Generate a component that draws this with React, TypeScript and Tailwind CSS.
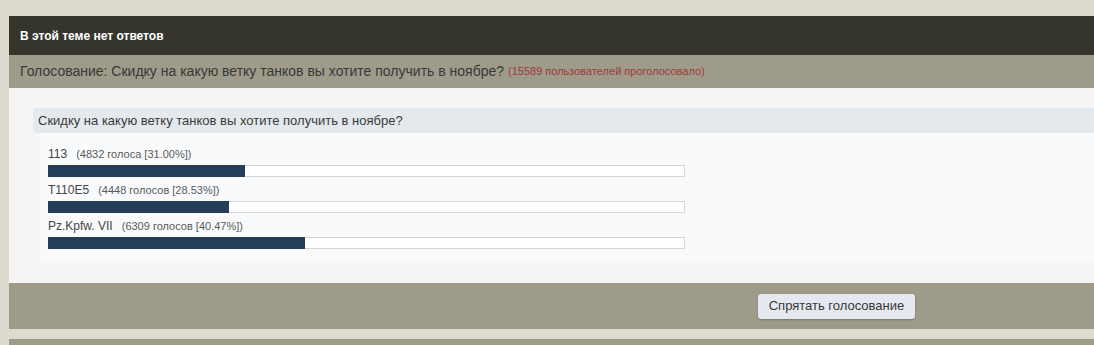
const options = [
  { name: "113", votes: "4832 голоса", pct: 31.0 },
  { name: "T110E5", votes: "4448 голосов", pct: 28.53 },
  { name: "Pz.Kpfw. VII", votes: "6309 голосов", pct: 40.47 },
];

export default function App() {
  return (
    <div
      className="h-[345px] w-[1094px] overflow-hidden bg-[#dddbcf] pt-4 pl-[9px]"
      style={{ fontFamily: '"Liberation Sans", Arial, sans-serif' }}
    >
      {/* шапка темы */}
      <div className="flex h-[39px] items-center bg-[#35352c] pl-[11px] text-[12px] font-bold text-white">
        В этой теме нет ответов
      </div>

      <div className="flex h-[33px] items-center bg-[#9e9b8b] pl-[11px] text-[14px] text-[#383838]">
        Голосование: Скидку на какую ветку танков вы хотите получить в ноябре?
        <span className="ml-1 text-[11px] text-[#9e3a3a]">(15589 пользователей проголосовало)</span>
      </div>

      {/* опрос */}
      <div className="h-[195px] bg-[#f5f5f5] pt-5 pl-6">
        <div className="flex h-[25px] items-center rounded-l-sm bg-[#e4e9ee] pl-[5px] text-[13px] text-[#3a3a3a]">
          Скидку на какую ветку танков вы хотите получить в ноябре?
        </div>
        <div className="ml-[7px] flex h-[128px] flex-col gap-[6px] bg-[#f8fafb] pt-[14px] pl-2">
          {options.map((o) => (
            <div key={o.name} className="flex flex-col gap-[5px]">
              <div className="flex h-[13px] items-end text-[12px] leading-none text-[#444444]">
                {o.name}
                <span className="ml-[9px] text-[11px] text-[#5a5a5a]">
                  ({o.votes} [{o.pct.toFixed(2)}%])
                </span>
              </div>
              <div className="flex h-[12px] w-[637px] border border-[#d6d6d6] bg-white">
                <div className="-my-px -ml-px h-[12px] bg-[#243e5a]" style={{ width: `${o.pct}%` }} />
              </div>
            </div>
          ))}
        </div>
      </div>

      <div className="flex h-[46px] items-center bg-[#9e9b8b] pl-[749px]">
        <button className="h-[25px] w-[157px] rounded-[3px] bg-[#e5e9ef] text-[13px] text-[#383838] shadow-[0_1px_2px_rgba(0,0,0,0.25)]">
          Спрятать голосование
        </button>
      </div>

      <div className="mt-[10px] h-[10px] bg-[#9e9b8b]" />
    </div>
  );
}
